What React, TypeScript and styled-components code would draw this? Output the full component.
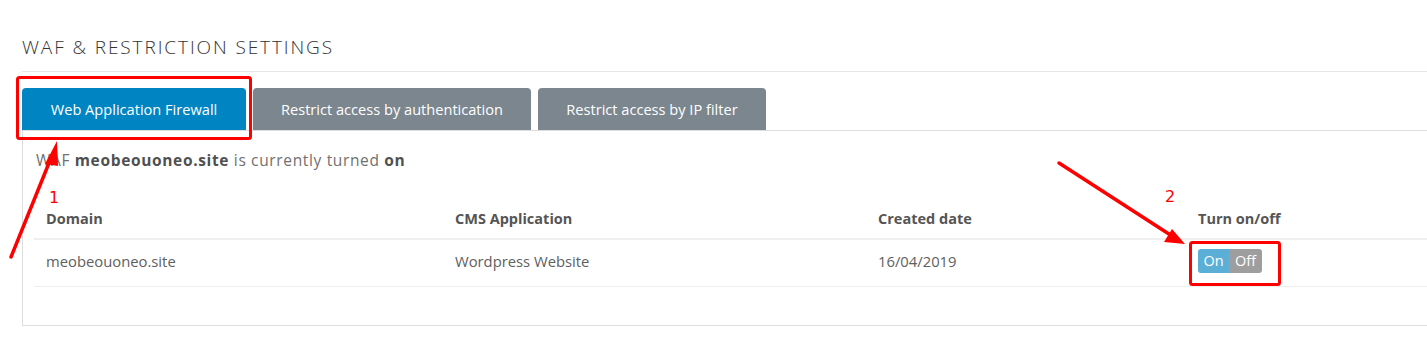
import React from 'react';
import styled, { createGlobalStyle } from 'styled-components';

const GlobalStyle = createGlobalStyle`
  html, body {
    margin: 0;
    padding: 0;
    background: #ffffff;
    overflow: hidden;
  }
  body {
    font-family: "Open Sans", "Liberation Sans", sans-serif;
  }
`;

// --- Styled Components ---

const Page = styled.div`
  position: relative;
  width: 1427px;
  height: 346px;
  padding: 35px 0 0 22px;
  box-sizing: border-box;
`;

const Title = styled.h2`
  margin: 0;
  font-family: "Open Sans", "Liberation Sans", sans-serif;
  font-weight: 300;
  font-size: 19px;
  letter-spacing: 1.9px;
  line-height: 24px;
  color: #333333;
`;

const Divider = styled.div`
  height: 1px;
  background: #e6e6e6;
  margin-top: 12px;
`;

const TabBar = styled.div`
  display: flex;
  gap: 7px;
  margin-top: 16px;
  height: 42px;
`;

const Tab = styled.button<{ $w: number }>`
  width: ${p => p.$w}px;
  height: 42px;
  padding: 0;
  border: none;
  border-radius: 4px 4px 0 0;
  background: #7b868e;
  color: #ffffff;
  font-family: "Open Sans", "Liberation Sans", sans-serif;
  font-size: 14.6px;
  white-space: nowrap;
  cursor: pointer;

  &[data-active='true'] {
    background: #0085c3;
  }
`;

const Panel = styled.div`
  width: 1500px;
  height: 196px;
  box-sizing: border-box;
  border: 1px solid #dddddd;
  border-right: none;
  padding: 18px 0 0 11px;
`;

const Status = styled.p`
  margin: 0 0 0 2px;
  font-family: "Open Sans", "Liberation Sans", sans-serif;
  font-size: 15.5px;
  line-height: 22px;
  letter-spacing: 0.65px;
  color: #707070;

  b {
    color: #505050;
    font-weight: 700;
  }
`;

const Table = styled.table`
  margin-top: 25px;
  border-collapse: collapse;
  table-layout: fixed;
  width: 1393px;
`;

const Th = styled.th<{ $w?: number }>`
  box-sizing: border-box;
  width: ${p => (p.$w ? `${p.$w}px` : 'auto')};
  text-align: left;
  padding: 13px 12px 9px;
  font-size: 14.5px;
  font-weight: 700;
  color: #555555;
  line-height: 20px;
  border-bottom: 2px solid #f0f0f0;
`;

const Td = styled.td`
  box-sizing: border-box;
  padding: 9px 12px 13px;
  font-size: 14.8px;
  line-height: 20px;
  color: #606060;
  border-bottom: 1px solid #eeeeee;
  vertical-align: middle;
`;

const Toggle = styled.div`
  display: inline-flex;
  height: 24px;
  border-radius: 3px;
  overflow: hidden;
  vertical-align: middle;
`;

const ToggleHalf = styled.span<{ $on?: boolean }>`
  display: flex;
  align-items: center;
  justify-content: center;
  width: ${p => (p.$on ? '31px' : '33px')};
  background: ${p => (p.$on ? '#5bafd7' : '#9e9e9e')};
  color: #ffffff;
  font-size: 14.5px;
`;

const Overlay = styled.svg`
  position: absolute;
  inset: 0;
  pointer-events: none;
`;

const Marker = styled.span<{ $x: number; $y: number }>`
  position: absolute;
  left: ${p => p.$x}px;
  top: ${p => p.$y}px;
  color: #ff0000;
  font-family: "DejaVu Sans", sans-serif;
  font-size: 16px;
  line-height: 16px;
`;

// --- Main Component ---

const tabs = [
  { label: 'Web Application Firewall', width: 224, active: true },
  { label: 'Restrict access by authentication', width: 278, active: false },
  { label: 'Restrict access by IP filter', width: 228, active: false },
];

const App: React.FC = () => {
  return (
    <>
      <GlobalStyle />
      <Page>
        <Title>WAF &amp; RESTRICTION SETTINGS</Title>
        <Divider />
        <TabBar>
          {tabs.map(t => (
            <Tab key={t.label} $w={t.width} data-active={t.active}>
              {t.label}
            </Tab>
          ))}
        </TabBar>
        <Panel>
          <Status>
            WAF <b>meobeouoneo.site</b> is currently turned <b>on</b>
          </Status>
          <Table>
            <thead>
              <tr>
                <Th $w={409}>Domain</Th>
                <Th $w={423}>CMS Application</Th>
                <Th $w={320}>Created date</Th>
                <Th>Turn on/off</Th>
              </tr>
            </thead>
            <tbody>
              <tr>
                <Td>meobeouoneo.site</Td>
                <Td>Wordpress Website</Td>
                <Td>16/04/2019</Td>
                <Td>
                  <Toggle>
                    <ToggleHalf $on>On</ToggleHalf>
                    <ToggleHalf>Off</ToggleHalf>
                  </Toggle>
                </Td>
              </tr>
            </tbody>
          </Table>
        </Panel>

        {/* Annotations */}
        <Overlay width="1427" height="346" viewBox="0 0 1427 346">
          <rect x="17.5" y="77.5" width="233" height="61" rx="2" fill="none" stroke="#ff0000" strokeWidth="3" />
          <rect x="1190.5" y="242.5" width="89" height="42" rx="2" fill="none" stroke="#ff0000" strokeWidth="3" />
          <line x1="11" y1="257" x2="51" y2="158" stroke="#ff0000" strokeWidth="3.5" strokeLinecap="round" />
          <polygon points="57,141 45,164 58,166" fill="#ff0000" />
          <line x1="1059" y1="163" x2="1172" y2="236" stroke="#ff0000" strokeWidth="3.5" strokeLinecap="round" />
          <polygon points="1185,244 1164,242 1172,229" fill="#ff0000" />
        </Overlay>
        <Marker $x={49} $y={190}>1</Marker>
        <Marker $x={1165} $y={189}>2</Marker>
      </Page>
    </>
  );
};

export default App;
